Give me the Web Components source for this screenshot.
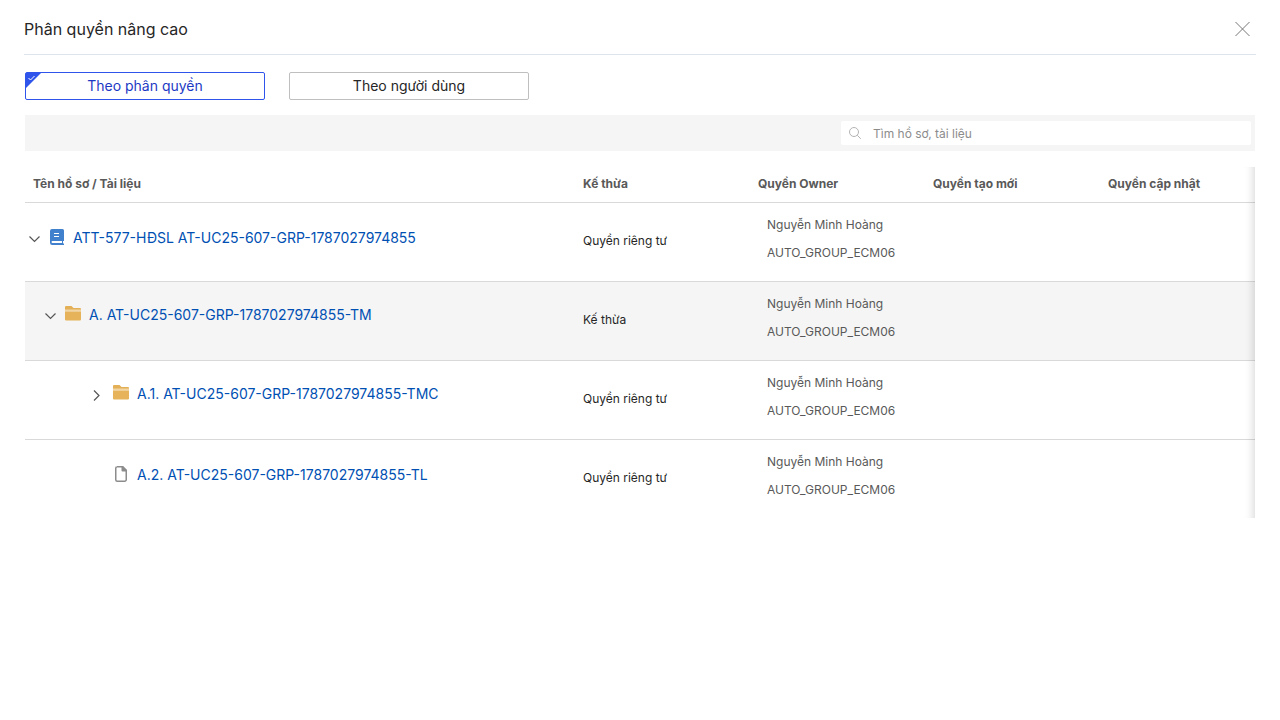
<!DOCTYPE html>
<html lang="vi">
<head>
<meta charset="UTF-8">
<meta name="viewport" content="width=device-width, initial-scale=1">
<title>Phân quyền nâng cao</title>
<style>
    body {
        margin: 0;
        background: #fff;
        color: #262626;
        font-family: Inter, "Liberation Sans", sans-serif;
        font-size: 14px;
    }
</style>
</head>
<body>

<permission-dialog>
    <span slot="title">Phân quyền nâng cao</span>
    <mode-switch></mode-switch>
    <search-bar placeholder="Tìm hồ sơ, tài liệu"></search-bar>
    <permission-table></permission-table>
</permission-dialog>

<script>
// Small icon set
const ICONS = {
    book: `<svg width="16" height="16" viewBox="0 0 16 16">
        <path fill="#4080cc" d="M3 0h10.500a1.500 1.500 0 0 1 1.500 1.500V12h-1v2.500h1V16H3.200A2.200 2.200 0 0 1 1 13.800V2a2 2 0 0 1 2-2z"/>
        <path fill="#fff" d="M3.500 12H13v2H3.500a1 1 0 0 1 0-2zM5 4h5v1H5zM5 7h5v1H5z"/></svg>`,
    folder: `<svg width="16" height="16" viewBox="0 1 16 16">
        <path fill="#e3b057" d="M1 1h5.500L8.500 3H15a1 1 0 0 1 1 1v2H0V2a1 1 0 0 1 1-1z"/>
        <path fill="#f1d5a2" d="M0 4.500h16v2H0z"/>
        <path fill="#e6b35a" d="M0 6.500h16v8a1 1 0 0 1-1 1H1a1 1 0 0 1-1-1z"/></svg>`,
    file: `<svg width="16" height="16" viewBox="0 0 16 16">
        <path fill="none" stroke="#8c8c8c" stroke-width="1.500" d="M4 .75h5.500l3.750 3.750v9.250a1.500 1.500 0 0 1-1.500 1.500H4.250a1.500 1.500 0 0 1-1.500-1.500V2.250A1.500 1.500 0 0 1 4.250.75"/>
        <path fill="#8c8c8c" d="M8.500 0H10l4 4v1.500h-4.500a1 1 0 0 1-1-1z"/></svg>`,
    open: `<svg width="24" height="16" viewBox="0 0 24 16">
        <path fill="none" stroke="#555" stroke-width="1.200" d="m4.500 5.500 5 5 5-5"/></svg>`,
    closed: `<svg width="24" height="16" viewBox="0 0 24 16">
        <path fill="none" stroke="#555" stroke-width="1.200" d="m5 3.500 5 5-5 5"/></svg>`,
    close: `<svg width="16" height="16" viewBox="0 0 16 16">
        <path fill="none" stroke="#777" stroke-width="1" d="M1.500 1 15.500 15M15.500 1 1.500 15"/></svg>`,
    search: `<svg width="12" height="12" viewBox="0 0 12 12">
        <g fill="none" stroke="#b3b3b3"><circle cx="5" cy="5" r="4.500"/><path d="m8.300 8.300 3.500 3.500"/></g></svg>`
};

class UiIcon extends HTMLElement {
    connectedCallback() {
        if (!this.shadowRoot) {
            this.attachShadow({ mode: 'open' });
        }
        this.shadowRoot.innerHTML = `
            <style>
                :host { display: block; flex: none; }
                svg { display: block; }
            </style>
            ${ICONS[this.getAttribute('name')] || ''}
        `;
    }
}

class PermissionDialog extends HTMLElement {
    constructor() {
        super();
        this.attachShadow({ mode: 'open' });
        this.shadowRoot.innerHTML = `
            <style>
                :host { display: block; padding: 0 24px; }
                header {
                    display: flex;
                    align-items: center;
                    justify-content: space-between;
                    padding: 16px 4px 12px 0;
                    border-bottom: 1px solid #dfe4ea;
                }
                h1 { margin: 0; font-size: 16px; font-weight: 400; line-height: 26px; }
                button {
                    padding: 2px;
                    border: 0;
                    background: none;
                    cursor: pointer;
                }
                main {
                    display: flex;
                    flex-direction: column;
                    gap: 16px;
                    padding: 17px 1px;
                }
            </style>
            <header>
                <h1><slot name="title"></slot></h1>
                <button type="button" aria-label="Đóng"><ui-icon name="close"></ui-icon></button>
            </header>
            <main><slot></slot></main>
        `;
    }
}

class ModeSwitch extends HTMLElement {
    constructor() {
        super();
        this.attachShadow({ mode: 'open' });
        this.shadowRoot.innerHTML = `
            <style>
                :host { display: flex; gap: 24px; margin-bottom: -1px; }
                button {
                    position: relative;
                    flex: 0 1 240px;
                    height: 28px;
                    padding: 0 8px 2px;
                    border: 1px solid #bfbfbf;
                    border-radius: 2px;
                    background: #fff;
                    color: #262626;
                    font: inherit;
                    cursor: pointer;
                }
                button[aria-pressed="true"] { border-color: #2f54eb; color: #1d39c4; }
                svg { display: none; position: absolute; left: 0; top: 0; }
                button[aria-pressed="true"] svg { display: block; }
            </style>
            <button type="button" aria-pressed="true">${this.corner()}Theo phân quyền</button>
            <button type="button" aria-pressed="false">${this.corner()}Theo người dùng</button>
        `;
        this.defineListeners();
    }

    corner() {
        return `<svg width="16" height="16" viewBox="0 0 16 16">
            <path fill="#2f54eb" d="M0 0h15L0 15z"/>
            <path fill="none" stroke="#fff" d="m2.500 5 2 2 4-4"/></svg>`;
    }

    defineListeners() {
        const buttons = this.shadowRoot.querySelectorAll('button');
        buttons.forEach((button) => {
            button.addEventListener('click', () => {
                buttons.forEach((b) => b.setAttribute('aria-pressed', b === button));
            });
        });
    }
}

class SearchBar extends HTMLElement {
    connectedCallback() {
        const text = this.getAttribute('placeholder') || '';
        this.attachShadow({ mode: 'open' });
        this.shadowRoot.innerHTML = `
            <style>
                :host {
                    display: flex;
                    justify-content: flex-end;
                    padding: 6px 4px;
                    background: #f5f5f5;
                }
                label {
                    display: flex;
                    align-items: center;
                    gap: 12px;
                    box-sizing: border-box;
                    flex: 0 1 410px;
                    height: 24px;
                    padding: 0 8px;
                    border-radius: 2px;
                    background: #fff;
                }
                input {
                    flex: 1;
                    min-width: 0;
                    padding: 0;
                    border: 0;
                    outline: 0;
                    background: none;
                    color: #262626;
                    font: inherit;
                    font-size: 12px;
                }
                input::placeholder { color: #8c8c8c; }
            </style>
            <label>
                <ui-icon name="search"></ui-icon>
                <input type="text" placeholder="${text}" aria-label="${text}">
            </label>
        `;
    }
}

const COLUMNS = ['Tên hồ sơ / Tài liệu', 'Kế thừa', 'Quyền Owner', 'Quyền tạo mới', 'Quyền cập nhật'];
const OWNERS = ['Nguyễn Minh Hoàng', 'AUTO_GROUP_ECM06'];
const ROWS = [
    { level: 0, icon: 'book', toggle: 'open', name: 'ATT-577-HĐSL AT-UC25-607-GRP-1787027974855', inherit: 'Quyền riêng tư' },
    { level: 1, icon: 'folder', toggle: 'open', name: 'A. AT-UC25-607-GRP-1787027974855-TM', inherit: 'Kế thừa', active: true },
    { level: 2, icon: 'folder', toggle: 'closed', name: 'A.1. AT-UC25-607-GRP-1787027974855-TMC', inherit: 'Quyền riêng tư' },
    { level: 2, icon: 'file', name: 'A.2. AT-UC25-607-GRP-1787027974855-TL', inherit: 'Quyền riêng tư' }
];

class PermissionTable extends HTMLElement {
    constructor() {
        super();
        this.attachShadow({ mode: 'open' });
        this.shadowRoot.innerHTML = `
            <style>
                :host { display: block; position: relative; }
                /* shade on the right edge: more columns to scroll to */
                :host::after {
                    content: "";
                    position: absolute;
                    top: 0;
                    right: 0;
                    bottom: 0;
                    width: 32px;
                    box-shadow: inset -10px 0 8px -8px rgba(0, 0, 0, 0.15);
                    pointer-events: none;
                }
                .scroller { overflow-x: auto; scrollbar-width: none; }
                table {
                    width: 100%;
                    min-width: 1250px;
                    table-layout: fixed;
                    border-collapse: separate;
                    border-spacing: 0;
                    font-size: 12px;
                }
                col.wide { width: 44%; }
                th, td {
                    box-sizing: border-box;
                    padding: 0 8px;
                    border-bottom: 1px solid #d9d9d9;
                    text-align: left;
                }
                th { height: 36px; padding-bottom: 2px; color: #595959; font-weight: 700; }
                td { height: 79px; padding-bottom: 4px; }
                tr:last-child td { height: 78px; border-bottom: 0; }
                thead tr:last-child th { border-bottom: 1px solid #d9d9d9; }
                tr.active td { background: #f5f5f5; }
                td.name { padding: 0; vertical-align: top; }
                .node {
                    display: flex;
                    align-items: flex-start;
                    padding-top: 26px;
                }
                .node.folder { padding-top: 24px; }
                .level-1 { padding-left: 16px; }
                .level-2 { padding-left: 64px; }
                .toggle {
                    width: 24px;
                    margin-top: 2px;
                    padding: 0;
                    border: 0;
                    background: none;
                    cursor: pointer;
                }
                a {
                    margin-left: 8px;
                    color: #0050b3;
                    font-size: 14px;
                    line-height: 18px;
                    text-decoration: none;
                }
                ul {
                    margin: 0;
                    padding: 0 0 2px 9px;
                    list-style: none;
                    color: #595959;
                    line-height: 28px;
                }
            </style>
            <div class="scroller">
                <table>
                    <colgroup><col class="wide"><col><col><col><col></colgroup>
                    <thead><tr>${COLUMNS.map((c) => `<th scope="col">${c}</th>`).join('')}</tr></thead>
                    <tbody>${ROWS.map((row) => this.renderRow(row)).join('')}</tbody>
                </table>
            </div>
        `;
    }

    renderRow(row) {
        const toggle = row.toggle
            ? `<button class="toggle" type="button" aria-label="Mở rộng / thu gọn" aria-expanded="${row.toggle === 'open'}">
                <ui-icon name="${row.toggle}"></ui-icon></button>`
            : '<span class="toggle"></span>';
        return `
            <tr class="${row.active ? 'active' : ''}">
                <td class="name">
                    <div class="node ${row.icon} level-${row.level}">
                        ${toggle}
                        <ui-icon name="${row.icon}"></ui-icon>
                        <a href="#">${row.name}</a>
                    </div>
                </td>
                <td>${row.inherit}</td>
                <td><ul>${OWNERS.map((o) => `<li>${o}</li>`).join('')}</ul></td>
                <td></td>
                <td></td>
            </tr>
        `;
    }
}

customElements.define('ui-icon', UiIcon);
customElements.define('permission-dialog', PermissionDialog);
customElements.define('mode-switch', ModeSwitch);
customElements.define('search-bar', SearchBar);
customElements.define('permission-table', PermissionTable);
</script>
</body>
</html>
